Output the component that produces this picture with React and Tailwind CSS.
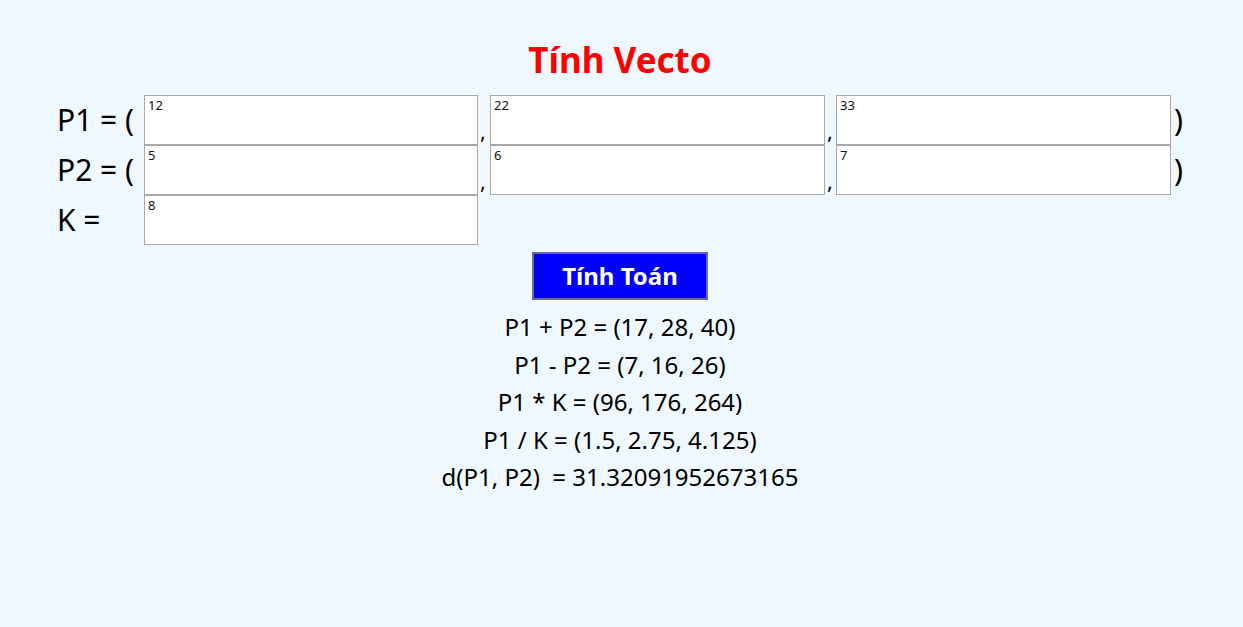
import React, { useState } from 'react';

const font = { fontFamily: '"Noto Sans", "Open Sans", sans-serif' };

function Box({ value, onChange, wide }) {
  return (
    <textarea
      className={
        (wide ? 'w-[335px] ' : 'w-[334px] ') +
        'h-[50px] shrink-0 bg-white border border-[#a9a9a9] px-[3px] py-0 text-[13px] leading-[18px] text-[#111] resize-none outline-none'
      }
      style={font}
      value={value}
      onChange={(e) => onChange(e.target.value)}
    />
  );
}

function Comma({ narrow }) {
  return (
    <span className={(narrow ? 'w-[11px] ' : 'w-[12px] ') + 'shrink-0 self-end text-[22px] leading-[30px] pl-[2px]'}>,</span>
  );
}

export default function App() {
  const [p1, setP1] = useState(['12', '22', '33']);
  const [p2, setP2] = useState(['5', '6', '7']);
  const [k, setK] = useState('8');

  const a = p1.map(Number);
  const b = p2.map(Number);
  const kk = Number(k);
  const d = Math.sqrt(a.reduce((s, v, i) => s + (v - b[i]) ** 2, 0));

  const set = (arr, setter, i) => (v) => {
    const next = [...arr];
    next[i] = v;
    setter(next);
  };

  return (
    <div className="min-h-[627px] w-full bg-[#f0f8ff] text-black" style={font}>
      <h1 className="pt-[37px] pr-[3px] text-center text-[35px] leading-[46px] font-bold text-[#ff0000]">Tính Vecto</h1>

      <div className="mt-[12px] pl-[57px] flex flex-col">
        <div className="flex items-stretch">
          <span className="w-[87px] shrink-0 self-center text-[30px] leading-[36px]">P1 = (</span>
          <Box value={p1[0]} onChange={set(p1, setP1, 0)} />
          <Comma />
          <Box wide value={p1[1]} onChange={set(p1, setP1, 1)} />
          <Comma narrow />
          <Box wide value={p1[2]} onChange={set(p1, setP1, 2)} />
          <span className="self-center pl-[3px] text-[30px] leading-[36px]">)</span>
        </div>
        <div className="flex items-stretch">
          <span className="w-[87px] shrink-0 self-center text-[30px] leading-[36px]">P2 = (</span>
          <Box value={p2[0]} onChange={set(p2, setP2, 0)} />
          <Comma />
          <Box wide value={p2[1]} onChange={set(p2, setP2, 1)} />
          <Comma narrow />
          <Box wide value={p2[2]} onChange={set(p2, setP2, 2)} />
          <span className="self-center pl-[3px] text-[30px] leading-[36px]">)</span>
        </div>
        <div className="flex items-stretch">
          <span className="w-[87px] shrink-0 self-center text-[30px] leading-[36px]">K =</span>
          <Box value={k} onChange={setK} />
        </div>
      </div>

      <div className="mt-[7px] pr-[3px] flex justify-center">
        <button className="w-[176px] h-[48px] bg-[#0000ff] border-2 border-[#6b6b8f] text-white text-[24px] leading-[30px] font-bold">
          Tính Toán
        </button>
      </div>

      <div className="mt-[8px] pr-[3px] flex flex-col items-center text-[24px] leading-[37.5px]">
        <span>P1 + P2 = ({a.map((v, i) => v + b[i]).join(', ')})</span>
        <span>P1 - P2 = ({a.map((v, i) => v - b[i]).join(', ')})</span>
        <span>P1 * K = ({a.map((v) => v * kk).join(', ')})</span>
        <span>P1 / K = ({a.map((v) => v / kk).join(', ')})</span>
        <span className="whitespace-pre">d(P1, P2)  = {d}</span>
      </div>
    </div>
  );
}
